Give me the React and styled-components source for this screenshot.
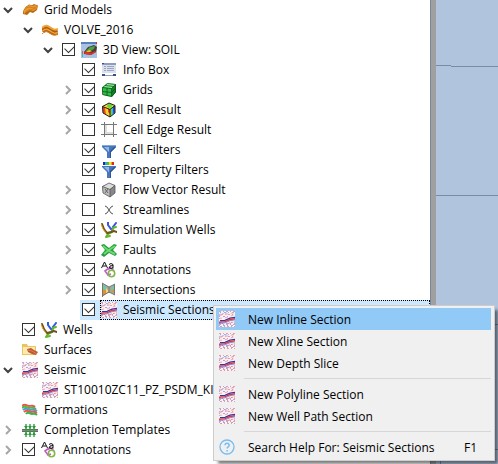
import React, { useState } from "react";
import styled, { createGlobalStyle, css } from "styled-components";

const GlobalStyle = createGlobalStyle`
  * { box-sizing: border-box; }
  body {
    margin: 0;
    overflow: hidden;
    background: #fff;
    color: #000;
    font: 12px/20px "Segoe UI", "Open Sans", "Noto Sans", sans-serif;
  }
`;

const Workspace = styled.main`
  display: grid;
  grid-template-columns: minmax(0, 430fr) 6px minmax(0, 62fr);
  height: 100vh;
`;

const Tree = styled.ul`
  margin: 0;
  padding: 0;
  list-style: none;
  background: #fff;
`;

const TreeRow = styled.li`
  position: relative;
  display: flex;
  height: 20px;
  padding-left: ${(p) => p.$level * 20}px;
  white-space: nowrap;
`;

const Expander = styled.button`
  flex: none;
  display: flex;
  align-items: center;
  justify-content: center;
  width: 16px;
  margin-right: 4px;
  padding: 0;
  border: 0;
  background: none;
`;

const ExpanderSpace = styled.span`
  flex: none;
  width: 20px;
`;

const Entry = styled.label`
  display: flex;
  align-items: stretch;
  flex: ${(p) => (p.$selected ? 1 : "none")};
  background: ${(p) => (p.$selected ? "#cce8ff" : "none")};
`;

const Content = styled.span`
  display: flex;
  align-items: center;
  gap: 6px;
  padding-left: ${(p) => (p.$checkable ? 0 : 1)}px;
  border: 1px dotted transparent;
  ${(p) =>
    p.$selected &&
    css`
      flex: 1;
      border-color: #000;
    `}
`;

const Check = styled.input`
  appearance: none;
  flex: none;
  position: relative;
  width: 13px;
  height: 13px;
  margin: 3px 5px 4px 2px;
  border: 1px solid #333;
  background: #fff;
  &:checked::before {
    content: "";
    position: absolute;
    left: 2px;
    top: 1px;
    width: 8px;
    height: 5px;
    border: solid #333;
    border-width: 0 0 1px 1px;
    transform: rotate(-45deg);
  }
`;

const Glyph = styled.svg`
  flex: none;
  display: block;
  width: 16px;
  height: 16px;
`;

const Chevron = styled.svg`
  width: 10px;
  height: 10px;
  fill: none;
  stroke: ${(p) => (p.$open ? "#404040" : "#a6a6a6")};
  stroke-width: 2;
`;

const Splitter = styled.div`
  border-left: 1px solid #778899;
  background: #a0a0a0;
`;

const Viewport = styled.section`
  overflow: hidden;
  background: #b0c4de;
`;

const GridLines = styled.svg`
  display: block;
  fill: none;
  stroke: #778bab;
`;

const Menu = styled.div`
  position: absolute;
  z-index: 1;
  left: 213px;
  top: 5px;
  width: 282px;
  padding: 2px 3px 2px 2px;
  border: 1px solid #ccc;
  background: #f0f0f0;
  box-shadow: 4px 4px 3px -1px rgba(0, 0, 0, 0.5);
`;

const MenuItem = styled.button`
  display: flex;
  align-items: center;
  width: 100%;
  height: 22px;
  padding: 0 14px 0 3px;
  gap: 13px;
  border: 0;
  background: ${(p) => (p.$active ? "#91c9f7" : "transparent")};
  color: inherit;
  font: inherit;
`;

const MenuText = styled.span`
  padding-top: 2px;
`;

const Shortcut = styled(MenuText)`
  margin-left: auto;
`;

const Separator = styled.hr`
  height: 1px;
  margin: 4px 0 4px 28px;
  border: 0;
  background: #d7d7d7;
`;

const seismic = (
  <>
    <path fill="#fbf0f2" d="M0 0h16v16H0z" />
    <g fill="none">
      <path stroke="#ea9ca6" strokeDasharray="2 2 1 2" d="M0 .5h16M2 3.5h14M0 13.5h16M1 15.5h15" />
      <path stroke="#a3aadf" strokeDasharray="1 3 2 2" d="M1 1.5h15M0 5.5h10M3 12.5h13M0 14.5h16" />
      <path stroke="#efabb3" strokeDasharray="3 3" d="M0 4.5l6-1 10-2M0 7.5l7-1 9-3" />
      <path stroke="#b3b9e4" strokeDasharray="2 1" d="M0 3.5l5-1 5-1" />
      <path stroke="#2b3ba6" strokeWidth="1.3" d="M1 9.6l5-.3 5-2.2 5-.8" />
      <path stroke="#e03548" strokeWidth="1.4" d="M0 11.2l6-.6 5-2.1 5-.8" />
      <path stroke="#6a74c4" strokeWidth=".8" d="M0 12.6l6-.8 5-2.1 5-.8" />
      <path stroke="#e9818d" strokeDasharray="2 1" d="M9 12.5l3-1 4-.6" />
    </g>
  </>
);

const wells = (
  <g fill="none" strokeLinecap="round">
    <path stroke="#3657e0" strokeWidth="2" d="M7 0v3l3 4 2 2M15 1l-3 4-1 4" />
    <path stroke="#62b82c" strokeWidth="2" d="M15 5l-3 1-1 4-4 2-2 3M5 15l4-1" />
    <path stroke="#73501c" strokeWidth="2" d="M1 2l2 5 3 4 4-1 3-1 3 1" />
    <path stroke="#d8a431" d="M0 2l2 5 3 4" />
  </g>
);

const annotations = (
  <>
    <path fill="none" stroke="#c45cc8" strokeWidth="1.6" d="M8 6l-4 3 3 4 3-1M5 8l5-2 3 3" />
    <circle cx="10.5" cy="11.5" r="3.2" fill="none" stroke="#83b64a" strokeWidth="1.6" />
    <path fill="none" stroke="#111" d="M.5 6L3.5 0 6.5 6M2 4h3M8 2.5l2-1 2 1v4M12 3.5l-3 .5-.5 2 2 .5 1.5-1" />
  </>
);

const funnel = (
  <>
    <path fill="#4778bd" d="M1 3h14v2l-5 5v6H6v-6L1 5z" />
    <path fill="#93b8e6" d="M3 5h5v5.5L7 9z" />
    <path fill="#2f5797" d="M9 9l4-4h2l-5 5v6H9z" />
    <path fill="#86a8d8" d="M1 3h14v1H1z" />
  </>
);

const art = {
  models: (
    <>
      <path fill="#b76a14" d="M1 9.5L3.5 5 7 2.5l3 .8L12 2l4 1.5L15 8l-4 3-3-1-3 3-4-1z" />
      <path fill="#ee9a2e" d="M1.5 8L4 5l3.5-2 3 1L13 3l2.5 1-1 3-3.5 2-3-1-4 2-2 2z" />
      <path fill="none" stroke="#c87618" strokeWidth=".8" d="M2 8l3-2.5 3-.5 3 1 4-1.5M3 10.5l3-2.5 4-.5 4-1.5" />
    </>
  ),
  model: (
    <g fill="none">
      <path stroke="#a95f10" strokeWidth="6" d="M0 9c4-4 6-2 9 0s4 2 7 1" />
      <path stroke="#f3a13b" strokeWidth="2" d="M0 6c4-4 6-2 9 0s4 2 7 1" />
      <path stroke="#f2a33e" strokeWidth="1.5" d="M0 9.5c4-4 6-2 9 0s4 2 7 1" />
      <path stroke="#e18d27" d="M0 12c4-4 6-2 9 0s4 1 7 0" />
    </g>
  ),
  view: (
    <>
      <path fill="#a9c2e3" d="M0 0h16v16H0z" />
      <path fill="#5a7fc0" d="M0 0h16v2H0z" />
      <path fill="#d92b20" d="M15 0h1v2h-1z" />
      <path fill="#4b3a3c" d="M3 10l4-5 6-2 3 2-1 5-5 3-7-1z" />
      <path fill="#de3527" d="M3 11l2-2 5 2 4-2 1 1-5 3-6-1z" />
      <path fill="#47a548" d="M5 9l4-4 5-1-1 3-4 2z" />
      <path fill="#e9c22b" d="M5 10l3-2 3 1-2 1z" />
      <path fill="#ef5b24" d="M1 9h1v3H1z" />
      <path fill="#2bc2cf" d="M1 12h1v3H1z" />
    </>
  ),
  info: (
    <>
      <path fill="#dbe1ec" d="M1 1h14v10H1z" />
      <path fill="#8e9cbe" d="M1 1h14v2H1zM4 13h8v1H4z" />
      <path fill="#3a4f88" d="M1 1h2v1H1zM1 12h3v2H1zM12 12h3v2h-3z" />
      <path stroke="#9aa6c1" d="M3 4.5h2M6 4.5h7M3 6.5h2M6 6.5h7M3 8.5h2M6 8.5h7" />
    </>
  ),
  grids: (
    <>
      <path fill="#8cef94" d="M1 5l5-4 9 1-4 4z" />
      <path fill="#32bd46" d="M1 5l10 1v9L2 13z" />
      <path fill="#147b24" d="M11 6l4-4v8l-4 5z" />
      <path fill="none" stroke="#07551a" strokeWidth=".8" d="M1.5 5.5l5-4 8 1v8l-4 4-9-2zM1.5 5.5l9 1v8M10.5 6.5l4-4M6 6v8M1.5 9.5l9 1 4-4M4 3.5l9 1" />
    </>
  ),
  result: (
    <>
      <path fill="#f7d71f" d="M1 4l7-3 6 2-5 4z" />
      <path fill="#f1461d" d="M1 4l8 3v8l-7-4z" />
      <path fill="#36b8d8" d="M9 7l5-4v8l-5 4z" />
      <path fill="#f9d325" d="M4 5l3 1v4l2 2v3l-4-2z" />
      <path fill="#67d541" d="M9 7l2-2v8l-2 2zM7 1l5 2-3 3-3-1z" />
      <path fill="#254dd0" d="M12 5l2-2v7l-2 2z" />
      <path fill="none" stroke="#222" d="M1.5 4.5L8 1l6 2.5V11l-5 4-7-4zM1.5 4.5L9 7.5V15M9 7.5l5-4" />
    </>
  ),
  edge: (
    <>
      <path fill="#ddd" d="M3 3h10v10H3z" />
      <path fill="#fff" d="M6 3h6v7H6z" />
      <path fill="none" stroke="#777" d="M3.5 0v15M12.5 0v15M0 2.5h16M0 12.5h16" />
    </>
  ),
  cell: funnel,
  property: (
    <>
      {funnel}
      <path fill="#fff" d="M0 0h16v4H0z" />
      <path fill="#162eae" d="M2 0h2v3H2z" />
      <path fill="#28aadd" d="M4 0h2v3H4z" />
      <path fill="#45c531" d="M6 0h2v3H6z" />
      <path fill="#f6df22" d="M8 0h2v3H8z" />
      <path fill="#ef9b20" d="M10 0h1v3h-1z" />
      <path fill="#e12c1c" d="M11 0h2v3h-2z" />
    </>
  ),
  flow: (
    <>
      <path fill="#ddd" d="M1 4l7-3 6 2-5 4z" />
      <path fill="#bbb" d="M1 4l8 3v8l-7-4z" />
      <path fill="#888" d="M9 7l5-4v8l-5 4z" />
      <path fill="none" stroke="#555" strokeWidth=".8" d="M1.5 4.5L8 1l6 2.5V11l-5 4-7-4zM1.5 4.5L9 7.5V15M9 7.5l5-4M4 7l3 4M7 7l-3 4" />
    </>
  ),
  streams: <path fill="none" stroke="#555" d="M4 4l2 1 4 6 2 1M12 4l-2 1-4 6-2 1" />,
  wells,
  faults: (
    <>
      <path fill="#2c9a3c" d="M0 3l3-1 5 4 5-4 3 1-4 5 4 4-2 2-6-3-5 4-3-2 4-5z" />
      <path fill="none" stroke="#67dc70" strokeWidth="2" d="M2 4l6 5 6 3M14 4L8 8l-5 4" />
    </>
  ),
  annotations,
  intersections: (
    <>
      <path fill="#a3ab9c" d="M1 1l7 4 6-3v11l-6-3-7 5z" />
      <path fill="#e98d34" d="M1 6l5 2 2 3 4-6 2 1v5l-5-2-8 5z" />
      <path fill="#6bc7b0" d="M2 3l3 2 2 4-3-1-2-1zM11 5l3-2v3l-4 4z" />
      <path fill="#e9dc70" d="M5 6l3 3-3 3z" />
      <path fill="none" stroke="#77766f" d="M1.5 1v14M8 5v6M13.5 2v11M1 1l7 4 6-3M1 14l7-4 6 3" />
    </>
  ),
  surfaces: (
    <>
      <path fill="#eac45e" d="M0 2h5l1 2h8v9H0z" />
      <path fill="#ffe9ad" d="M1 5h12v7H1z" />
      <path fill="#bd5837" d="M5 7l4-1 3 2 4 2-2 3-4-1-4-2z" />
      <path fill="none" stroke="#e27e57" d="M6 8l4 1 5 3" />
    </>
  ),
  seismic,
  formations: (
    <g fill="none" strokeWidth="2">
      <path stroke="#ee5549" d="M0 4c3-3 5 0 7 0s4-1 6 1" />
      <path stroke="#4db947" d="M0 6c3-3 5 0 7 0s4-1 7 1" />
      <path stroke="#4f9bd4" d="M1 8c3-3 5 0 7 0s4-1 7 1" />
      <path stroke="#ee5549" d="M2 10c3-3 5 0 7 0s3-1 6 1" />
      <path stroke="#39b54a" d="M4 12c2-3 4 0 6 0s3-1 5 1" />
    </g>
  ),
  completion: (
    <>
      <path fill="#666" d="M0 7h16v3H0z" />
      <path fill="#8c8c8c" d="M0 8h16v1H0z" />
      <path fill="none" stroke="#2fa43e" strokeWidth="1.4" d="M4 2v13M8 2v13M12 2v13" />
      <path fill="#249c35" d="M2 4h4L4 7zM6 4h4L8 7zM10 4h4l-2 3zM2 13h4l-2-3zM6 13h4l-2-3zM10 13h4l-2-3z" />
    </>
  ),
  help: (
    <g fill="none" stroke="#78bdf2">
      <circle cx="8" cy="8" r="7" strokeWidth="1.3" />
      <path strokeWidth="1.5" d="M6 6.3c0-3 4.4-2.5 4.2 0C10 8 8.1 7.8 8.1 9.5M8.1 11v1.4" />
    </g>
  ),
};

const Icon = ({ name }) => (
  <Glyph viewBox="0 0 16 16" aria-hidden="true">{art[name]}</Glyph>
);

const nodes = [
  { level: 0, open: true, icon: "models", text: "Grid Models" },
  { level: 1, open: true, icon: "model", text: "VOLVE_2016" },
  { level: 2, open: true, checked: true, icon: "view", text: "3D View: SOIL" },
  { level: 3, checked: true, icon: "info", text: "Info Box" },
  { level: 3, open: false, checked: true, icon: "grids", text: "Grids" },
  { level: 3, open: false, checked: true, icon: "result", text: "Cell Result" },
  { level: 3, open: false, checked: false, icon: "edge", text: "Cell Edge Result" },
  { level: 3, checked: true, icon: "cell", text: "Cell Filters" },
  { level: 3, checked: true, icon: "property", text: "Property Filters" },
  { level: 3, open: false, checked: false, icon: "flow", text: "Flow Vector Result" },
  { level: 3, open: false, checked: false, icon: "streams", text: "Streamlines" },
  { level: 3, open: false, checked: true, icon: "wells", text: "Simulation Wells" },
  { level: 3, open: false, checked: true, icon: "faults", text: "Faults" },
  { level: 3, open: false, checked: true, icon: "annotations", text: "Annotations" },
  { level: 3, open: false, checked: true, icon: "intersections", text: "Intersections" },
  { level: 3, checked: true, icon: "seismic", text: "Seismic Sections", selected: true },
  { level: 0, checked: true, icon: "wells", text: "Wells" },
  { level: 0, icon: "surfaces", text: "Surfaces" },
  { level: 0, open: true, icon: "seismic", text: "Seismic" },
  { level: 1, icon: "seismic", text: "ST10010ZC11_PZ_PSDM_KIRCH" },
  { level: 0, icon: "formations", text: "Formations" },
  { level: 0, open: false, icon: "completion", text: "Completion Templates" },
  { level: 0, open: false, checked: true, icon: "annotations", text: "Annotations" },
];

const menuEntries = [
  { icon: "seismic", text: "New Inline Section", active: true },
  { icon: "seismic", text: "New Xline Section" },
  { icon: "seismic", text: "New Depth Slice" },
  null,
  { icon: "seismic", text: "New Polyline Section" },
  { icon: "seismic", text: "New Well Path Section" },
  null,
  { icon: "help", text: "Search Help For: Seismic Sections", shortcut: "F1" },
];

function ContextMenu() {
  return (
    <Menu role="menu">
      {menuEntries.map((entry, i) =>
        entry ? (
          <MenuItem key={i} type="button" role="menuitem" $active={entry.active}>
            <Icon name={entry.icon} />
            <MenuText>{entry.text}</MenuText>
            {entry.shortcut && <Shortcut>{entry.shortcut}</Shortcut>}
          </MenuItem>
        ) : (
          <Separator key={i} />
        )
      )}
    </Menu>
  );
}

function TreeNode({ node }) {
  const [checked, setChecked] = useState(node.checked);
  const checkable = node.checked !== undefined;
  return (
    <TreeRow $level={node.level}>
      {node.open === undefined ? (
        <ExpanderSpace />
      ) : (
        <Expander type="button" aria-expanded={node.open} aria-label={node.text}>
          <Chevron $open={node.open} viewBox="0 0 10 10">
            <path d={node.open ? "M1 3l4 4 4-4" : "M3 1l4 4-4 4"} />
          </Chevron>
        </Expander>
      )}
      <Entry as={checkable ? "label" : "span"} $selected={node.selected}>
        {checkable && (
          <Check type="checkbox" checked={checked} onChange={(e) => setChecked(e.target.checked)} />
        )}
        <Content $selected={node.selected} $checkable={checkable}>
          <Icon name={node.icon} />
          {node.text}
        </Content>
      </Entry>
      {node.selected && <ContextMenu />}
    </TreeRow>
  );
}

export default function App() {
  return (
    <>
      <GlobalStyle />
      <Workspace>
        <Tree>
          {nodes.map((node, i) => (
            <TreeNode key={i} node={node} />
          ))}
        </Tree>
        <Splitter />
        <Viewport aria-label="3D view">
          <GridLines width="62" height="464" viewBox="0 0 62 464">
            <path d="M0 65.5h15M15 66.5h47M0 195.5h62M0 324.5h62M4 449.5h58M4.5 449v15" />
          </GridLines>
        </Viewport>
      </Workspace>
    </>
  );
}
